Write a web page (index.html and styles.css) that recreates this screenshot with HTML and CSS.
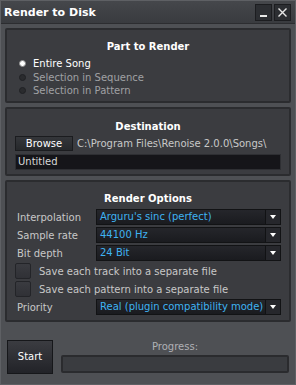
FILE: index.html
```html
<!DOCTYPE html>
<html lang="en">
<head>
    <meta charset="UTF-8">
    <title>Render to Disk</title>
    <link rel="stylesheet" href="styles.css">
</head>
<body>
    <div class="window">
        <div class="titlebar">
            <span class="title">Render to Disk</span>
            <div class="win-buttons">
                <div class="win-btn">
                    <svg width="15" height="15" viewBox="0 0 15 15"><rect x="4" y="10" width="7" height="2" fill="#e8e8e8"/></svg>
                </div>
                <div class="win-btn">
                    <svg width="15" height="15" viewBox="0 0 15 15"><path d="M3.5 3.5 L11.5 11.5 M11.5 3.5 L3.5 11.5" stroke="#e8e8e8" stroke-width="1.4"/></svg>
                </div>
            </div>
        </div>

        <div class="content">
            <div class="panel part">
                <h2>Part to Render</h2>
                <div class="radio checked"><span class="dot"></span>Entire Song</div>
                <div class="radio"><span class="dot"></span>Selection in Sequence</div>
                <div class="radio"><span class="dot"></span>Selection in Pattern</div>
            </div>

            <div class="panel dest">
                <h2>Destination</h2>
                <div class="browse-row">
                    <div class="browse">Browse</div>
                    <span class="path">C:\Program Files\Renoise 2.0.0\Songs\</span>
                </div>
                <div class="filename">Untitled</div>
            </div>

            <div class="panel options">
                <h2>Render Options</h2>
                <div class="opt-row">
                    <label>Interpolation</label>
                    <div class="select"><span class="value">Arguru's sinc (perfect)</span><span class="arrow"></span></div>
                </div>
                <div class="opt-row">
                    <label>Sample rate</label>
                    <div class="select"><span class="value">44100 Hz</span><span class="arrow"></span></div>
                </div>
                <div class="opt-row">
                    <label>Bit depth</label>
                    <div class="select"><span class="value">24 Bit</span><span class="arrow"></span></div>
                </div>
                <div class="check-row"><span class="box"></span>Save each track into a separate file</div>
                <div class="check-row"><span class="box"></span>Save each pattern into a separate file</div>
                <div class="opt-row">
                    <label>Priority</label>
                    <div class="select"><span class="value">Real (plugin compatibility mode)</span><span class="arrow"></span></div>
                </div>
            </div>

            <div class="footer">
                <div class="start">Start</div>
                <div class="progress-col">
                    <div class="progress-label">Progress:</div>
                    <div class="progress"></div>
                </div>
            </div>
        </div>
    </div>
</body>
</html>
```

FILE: styles.css
```css
body {
    margin: 0;
    background-color: #4d4f53;
    font-family: "DejaVu Sans", sans-serif;
    font-size: 10px;
    color: #d6d6d6;
}

.window {
    width: 296px;
    height: 385px;
    box-sizing: border-box;
    background-color: #4e5054;
    border: 1px solid #5e6064;
}

.titlebar {
    height: 22px;
    display: flex;
    align-items: center;
    justify-content: space-between;
    padding: 0 4px 0 3px;
    background: linear-gradient(#45474b, #393b3f);
    border-bottom: 1px solid #2c2d30;
}

.title {
    font-weight: bold;
    font-size: 11px;
    color: #ffffff;
}

.win-buttons {
    display: flex;
    gap: 2px;
}

.win-btn {
    width: 15px;
    height: 15px;
    background-color: #2c2e32;
    border: 1px solid #1c1d20;
    display: flex;
}

.content {
    padding: 4px 4px 0 4px;
    display: flex;
    flex-direction: column;
    gap: 4px;
}

.panel {
    background-color: #3b3c40;
    border: 2px solid #2b2c2f;
    border-radius: 2px;
    padding: 0 8px;
}

.panel h2 {
    margin: 0;
    text-align: center;
    font-size: 10px;
    font-weight: bold;
    color: #ffffff;
}

.part {
    height: 71px;
}

.part h2 {
    padding: 11px 0 5px;
}

.radio {
    display: flex;
    align-items: center;
    height: 13.5px;
    color: #a0a1a4;
    padding-left: 4px;
}

.radio.checked {
    color: #ffffff;
}

.dot {
    width: 5px;
    height: 5px;
    border-radius: 50%;
    background-color: #2a2b2e;
    border: 1px solid #202124;
    margin-right: 7px;
}

.radio.checked .dot {
    background-color: #ffffff;
    border-color: #8a8a8a;
}

.dest {
    height: 65px;
}

.dest h2 {
    padding: 12px 0 4px;
}

.browse-row {
    display: flex;
    align-items: center;
    gap: 4px;
}

.browse {
    width: 56px;
    height: 13px;
    line-height: 13px;
    text-align: center;
    background: linear-gradient(#34363a, #26282b);
    border: 1px solid #1b1c1f;
    color: #ffffff;
}

.path {
    color: #c8c8c8;
}

.filename {
    margin-top: 3px;
    height: 14px;
    line-height: 14px;
    background-color: #151519;
    border: 1px solid #2e2f33;
    padding-left: 2px;
    color: #d8d8d8;
}

.options {
    height: 138px;
}

.options h2 {
    padding: 11px 0 4px;
}

.opt-row {
    display: flex;
    align-items: center;
    height: 18px;
}

.opt-row label {
    width: 79px;
    padding-left: 2px;
    color: #c8c8c8;
}

.select {
    flex: 1;
    height: 14px;
    display: flex;
    background: linear-gradient(#25262b, #1a1b1f);
    border: 1px solid #121315;
}

.select .value {
    flex: 1;
    line-height: 14px;
    padding-left: 3px;
    color: #3fb3f2;
}

.arrow {
    width: 14px;
    border-left: 1px solid #111214;
    background-color: #26272c;
    position: relative;
}

.arrow::after {
    content: "";
    position: absolute;
    left: 4px;
    top: 5px;
    border-left: 3px solid transparent;
    border-right: 3px solid transparent;
    border-top: 4px solid #ffffff;
}

.check-row {
    display: flex;
    align-items: center;
    height: 18px;
    color: #c8c8c8;
}

.box {
    width: 14px;
    height: 14px;
    background: linear-gradient(#3a3b40, #303136);
    border: 1px solid #232428;
    border-radius: 2px;
    margin-right: 8px;
}

.footer {
    display: flex;
    align-items: flex-start;
    padding: 14px 0 0 2px;
    gap: 8px;
}

.start {
    width: 44px;
    height: 32px;
    line-height: 32px;
    text-align: center;
    background: linear-gradient(#3b3c41, #222328);
    border: 1px solid #16171a;
    color: #ffffff;
}

.progress-col {
    flex: 1;
    display: flex;
    flex-direction: column;
    align-items: center;
    padding-right: 2px;
}

.progress-label {
    color: #b0b1b4;
    height: 14px;
    margin-top: 1px;
}

.progress {
    width: 100%;
    box-sizing: border-box;
    height: 18px;
    background-color: #3a3c40;
    border: 2px solid #2a2b2e;
    border-radius: 2px;
}
```
